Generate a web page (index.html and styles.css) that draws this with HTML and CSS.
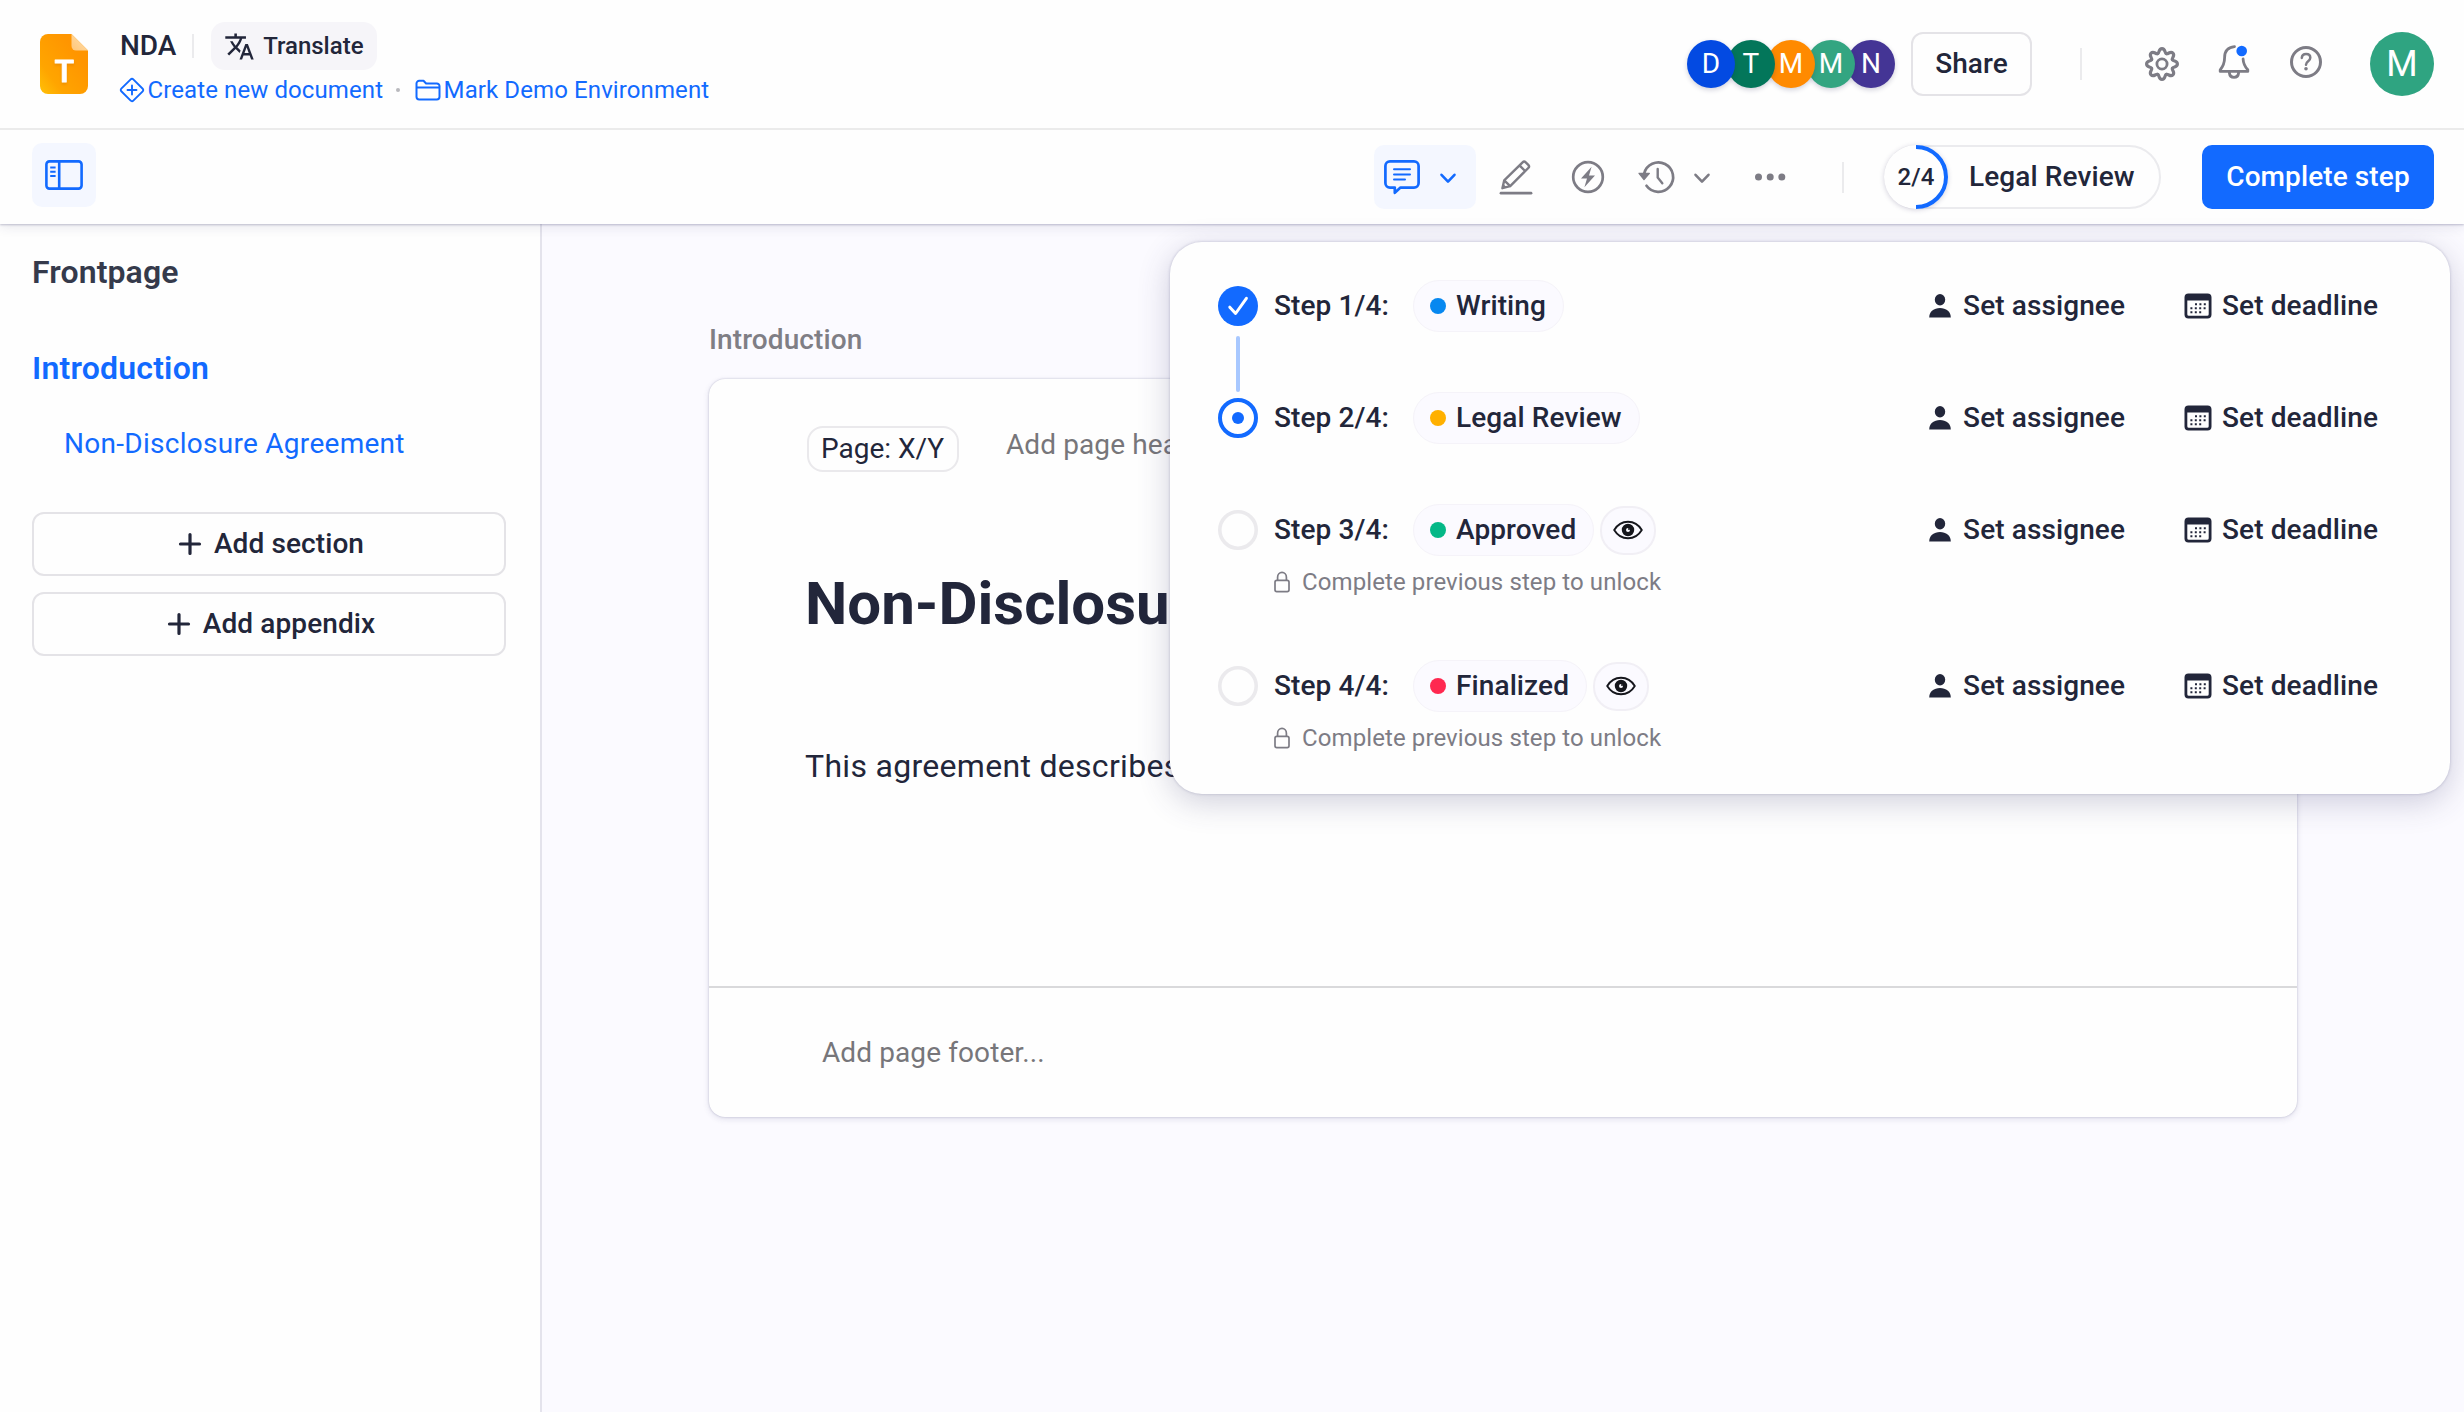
FILE: index.html
```html
<!DOCTYPE html>
<html lang="en">
<head>
<meta charset="utf-8">
<title>NDA</title>
<link rel="stylesheet" href="styles.css">
</head>
<body>
<svg width="0" height="0" class="sprite" aria-hidden="true">
  <defs>
    <path id="cog-tooth" d="M-4.3-10.4C-2.3-11.2-3.6-15.4 0-15.4S2.3-11.2 4.3-10.4"/>
    <symbol id="i-plus" viewBox="0 0 24 24"><path d="M12 2.5v19M2.5 12h19" stroke="currentColor" stroke-width="3.2" stroke-linecap="round"/></symbol>
    <symbol id="i-chevron" viewBox="0 0 20 20"><path d="M3.5 6.8 10 13.6l6.500-6.800" fill="none" stroke="currentColor" stroke-width="2.600" stroke-linecap="round" stroke-linejoin="round"/></symbol>
    <symbol id="i-person" viewBox="0 0 24 26"><ellipse cx="12" cy="6.700" rx="5.200" ry="5.700"/><path d="M1.200 24.600C1.200 18.500 6 15.100 12 15.100s10.800 3.400 10.800 9.500z"/></symbol>
    <symbol id="i-calendar" viewBox="0 0 28 26"><path fill-rule="evenodd" d="M4.500.6h19A4 4 0 0 1 27.500 4.600v17a4 4 0 0 1-4 4h-19a4 4 0 0 1-4-4v-17a4 4 0 0 1 4-4zM3.300 7.600v13.600a1.600 1.600 0 0 0 1.600 1.600h18.200a1.600 1.600 0 0 0 1.600-1.600V7.600z"/><path d="M11 11.200h12M6.400 15.200h17M6.400 19.200h13" stroke="currentColor" stroke-width="2" stroke-dasharray="2 2.400"/></symbol>
    <symbol id="i-eye" viewBox="0 0 30 20"><path d="M1.200 10C4.500 4.500 9.500 1.700 15 1.700S25.500 4.500 28.800 10C25.500 15.500 20.500 18.300 15 18.300S4.500 15.500 1.200 10z" fill="none" stroke="currentColor" stroke-width="1.900" stroke-linejoin="round"/><circle cx="15" cy="10" r="4.100" fill="none" stroke="currentColor" stroke-width="4.200"/><circle cx="16" cy="9" r="1" fill="currentColor"/></symbol>
    <symbol id="i-lock" viewBox="0 0 18 22"><rect x="2" y="9.400" width="14" height="11.200" rx="1.800" fill="none" stroke="currentColor" stroke-width="1.700"/><path d="M4.600 9.400V6.200a4.400 4.800 0 0 1 8.800 0v3.200" fill="none" stroke="currentColor" stroke-width="1.700"/></symbol>
  </defs>
</svg>

<div class="app">
  <header class="topbar">
    <svg class="logo" width="48" height="60" viewBox="0 0 48 60">
      <defs>
        <linearGradient id="logo-fill" x1="0" y1="1" x2=".75" y2=".3"><stop offset="0" stop-color="#ffc107"/><stop offset=".35" stop-color="#ffa500"/><stop offset="1" stop-color="#ff9500"/></linearGradient>
        <linearGradient id="logo-fold" x1="1" y1="0" x2="0" y2="1"><stop offset="0" stop-color="#ffe0b0"/><stop offset="1" stop-color="#ffc678"/></linearGradient>
      </defs>
      <path d="M8 0h23.500L48 16.500V52a8 8 0 0 1-8 8H8a8 8 0 0 1-8-8V8a8 8 0 0 1 8-8z" fill="url(#logo-fill)"/>
      <path d="M31.500 0 48 16.500H36a4.500 4.500 0 0 1-4.500-4.500z" fill="url(#logo-fold)"/>
      <text class="logo-letter" x="24.300" y="47.500" text-anchor="middle">T</text>
    </svg>
    <div class="doc">
      <div class="doc-title">
        <span class="doc-name">NDA</span>
        <i class="rule rule-sm"></i>
        <button class="translate">
          <svg width="31" height="31" viewBox="0 0 24 24" fill="currentColor"><path d="M12.870 15.070l-2.540-2.510.03-.03c1.740-1.940 2.980-4.170 3.710-6.530H17V4h-7V2H8v2H1v1.990h11.170C11.500 7.920 10.440 9.750 9 11.350 8.070 10.320 7.300 9.190 6.690 8h-2c.73 1.630 1.730 3.170 2.980 4.560l-5.090 5.020L4 19l5-5 3.110 3.110.76-2.040zM18.500 10h-2L12 22h2l1.120-3h4.750L21 22h2l-4.500-12zm-2.620 7l1.620-4.330L19.120 17h-3.240z"/></svg>
          <span>Translate</span>
        </button>
      </div>
      <nav class="crumbs">
        <a class="crumb">
          <svg width="26" height="26" viewBox="0 0 26 26" fill="none" stroke="currentColor" stroke-width="1.900" stroke-linejoin="round" stroke-linecap="round"><path d="M11.700 2.300 2.300 11.700a1.800 1.800 0 0 0 0 2.600l9.400 9.400a1.800 1.800 0 0 0 2.600 0l9.400-9.400a1.800 1.800 0 0 0 0-2.600L14.300 2.300a1.800 1.800 0 0 0-2.600 0zM13 8.500v9M8.500 13h9"/></svg>
          <span>Create new document</span>
        </a>
        <i class="crumb-dot"></i>
        <a class="crumb">
          <svg width="26" height="22" viewBox="0 0 26 22" fill="none" stroke="currentColor" stroke-width="2" stroke-linejoin="round"><path d="M1.500 4.500A2.700 2.700 0 0 1 4.200 1.800h4.300l2.600 2.700h10.700a2.700 2.700 0 0 1 2.700 2.700v10.600a2.700 2.700 0 0 1-2.700 2.700H4.200a2.700 2.700 0 0 1-2.700-2.700zM1.500 8.500h23"/></svg>
          <span>Mark Demo Environment</span>
        </a>
      </nav>
    </div>
    <div class="people">
      <span class="face blue">D</span><span class="face teal">T</span><span class="face orange">M</span><span class="face green">M</span><span class="face purple">N</span>
    </div>
    <button class="share">Share</button>
    <i class="rule rule-md"></i>
    <div class="top-icons">
      <svg width="40" height="40" viewBox="-20 -20 40 40" fill="none" stroke="currentColor" stroke-width="3.200" stroke-linecap="round">
        <use href="#cog-tooth"/><use href="#cog-tooth" transform="rotate(45)"/><use href="#cog-tooth" transform="rotate(90)"/><use href="#cog-tooth" transform="rotate(135)"/><use href="#cog-tooth" transform="rotate(180)"/><use href="#cog-tooth" transform="rotate(225)"/><use href="#cog-tooth" transform="rotate(270)"/><use href="#cog-tooth" transform="rotate(315)"/>
        <circle r="5.100" stroke-width="2.800"/>
      </svg>
      <svg width="40" height="40" viewBox="0 0 40 40" fill="none" stroke="currentColor" stroke-width="2.800" stroke-linecap="round" stroke-linejoin="round">
        <path d="M20.500 4.600C13 5.400 10.600 10 10.600 15.500c0 6-1.200 8.500-4.400 12.300v1.600h27.600v-1.600c-3.400-3.600-4.500-6.500-4.700-10.800M15.400 31c.3 2.700 2 4.300 4.600 4.300s4.300-1.600 4.600-4.300"/>
        <circle cx="27.700" cy="9" r="5.300" fill="#126aff" stroke="none"/>
      </svg>
      <svg width="40" height="40" viewBox="0 0 40 40" fill="none" stroke="currentColor" stroke-width="3" stroke-linecap="round">
        <circle cx="20" cy="20" r="14.500"/>
        <path d="M15.800 15.900c.2-2.500 1.900-3.900 4.300-3.900 2.500 0 4.200 1.500 4.200 3.700 0 3.700-4.200 3.400-4.300 7" stroke-width="2.500"/>
        <circle cx="20" cy="26.800" r="1.800" fill="currentColor" stroke="none"/>
      </svg>
    </div>
    <span class="me">M</span>
  </header>

  <div class="toolbar">
    <button class="panel-toggle">
      <svg width="38" height="30" viewBox="0 0 38 30" fill="none" stroke="currentColor" stroke-width="2.600"><rect x="1.400" y="1.400" width="35.200" height="27.200" rx="3"/><path d="M14.200 1.400v27.200"/><path d="M5.200 7.500h5.400M5.200 11.800h5.400M5.200 16.100h5.400" stroke-width="2"/></svg>
    </button>
    <button class="comment">
      <svg width="38" height="36" viewBox="0 0 38 36" fill="none" stroke="currentColor" stroke-width="2.700" stroke-linejoin="round" stroke-linecap="round"><path d="M7 2.400h24a4.600 4.600 0 0 1 4.600 4.600v17a4.600 4.600 0 0 1-4.600 4.600H17.500L11.800 33.800V28.600H7A4.600 4.600 0 0 1 2.400 24V7A4.600 4.600 0 0 1 7 2.400z"/><path d="M11 10.300h16M11 15.400h16M11 20.400h11" stroke-width="2"/></svg>
      <svg width="20" height="20"><use href="#i-chevron"/></svg>
    </button>
    <svg class="tool-pencil" width="36" height="36" viewBox="0 0 36 36" fill="none" stroke="currentColor" stroke-linejoin="round" stroke-linecap="round"><path d="M6.200 21.400 24.600 3.300a2.200 2.200 0 0 1 3.100 0l2.600 2.600a2.200 2.200 0 0 1 0 3.100L12.200 27.200 4.400 29.200zM21.500 6.400l5.600 5.600M6.200 21.400l6 5.800" stroke-width="2.400"/><path d="m4 29.500 1.300-4.600 3.300 3.400z" fill="currentColor" stroke="none"/><path d="M3 34.200h30" stroke-width="2.800"/></svg>
    <svg class="tool-bolt" width="36" height="36" viewBox="0 0 36 36"><circle cx="18" cy="18" r="14.800" fill="none" stroke="currentColor" stroke-width="2.700"/><path d="M21.600 7.800 11 19.600h6L14.400 28.200 25 16.400h-6z" fill="currentColor"/></svg>
    <svg class="tool-history" width="40" height="36" viewBox="0 0 40 36" fill="none" stroke="currentColor" stroke-width="2.700" stroke-linecap="round" stroke-linejoin="round"><path d="M7.100 14.800A14.700 14.700 0 1 1 9.500 26.800"/><path d="M2 14.300h10.400L7 20.700z" fill="currentColor" stroke-width="1.200"/><path d="M20.700 10v8.600l4.600 5.600" stroke-width="2.400"/></svg>
    <svg class="tool-more-history" width="20" height="20"><use href="#i-chevron"/></svg>
    <svg class="tool-dots" width="40" height="36" viewBox="0 0 40 36" fill="currentColor"><circle cx="8.500" cy="18" r="3.500"/><circle cx="20.200" cy="18" r="3.500"/><circle cx="31.800" cy="18" r="3.500"/></svg>
    <i class="rule rule-tool"></i>
    <button class="stage">
      <span class="stage-ring">
        <svg class="ring-arc" width="64" height="64" viewBox="0 0 64 64"><path d="M32 2a30 30 0 0 1 0 60" fill="none" stroke="#126aff" stroke-width="4"/></svg>
        <span>2/4</span>
      </span>
      <span class="stage-name">Legal Review</span>
    </button>
    <button class="complete">Complete step</button>
  </div>

  <div class="body">
    <aside class="sidebar">
      <a class="nav-item">Frontpage</a>
      <a class="nav-item active">Introduction</a>
      <a class="nav-sub">Non-Disclosure Agreement</a>
      <button class="add"><svg width="24" height="24"><use href="#i-plus"/></svg><span>Add section</span></button>
      <button class="add"><svg width="24" height="24"><use href="#i-plus"/></svg><span>Add appendix</span></button>
    </aside>
    <main class="canvas">
      <h2 class="section-label">Introduction</h2>
      <article class="page">
        <div class="page-main">
          <div class="page-head"><span class="page-chip">Page: X/Y</span><span class="page-hint">Add page header...</span></div>
          <h1>Non-Disclosure Agreement</h1>
          <p>This agreement describes</p>
        </div>
        <footer class="page-foot">Add page footer...</footer>
      </article>
    </main>
  </div>

  <section class="steps">
    <div class="step">
      <svg class="mark" width="40" height="40" viewBox="0 0 40 40"><circle cx="20" cy="20" r="20" fill="#126aff"/><path d="m11.800 21.200 5.800 6.300 10.800-15.200" fill="none" stroke="#fff" stroke-width="3" stroke-linecap="round" stroke-linejoin="round"/></svg>
      <span class="step-no">Step 1/4:</span>
      <span class="pill"><i class="dot azure"></i>Writing</span>
      <span class="set-who"><svg width="24" height="26" fill="currentColor"><use href="#i-person"/></svg>Set assignee</span>
      <span class="set-when"><svg width="28" height="26" fill="currentColor"><use href="#i-calendar"/></svg>Set deadline</span>
    </div>
    <div class="link"></div>
    <div class="step">
      <svg class="mark" width="40" height="40" viewBox="0 0 40 40"><circle cx="20" cy="20" r="18" fill="#fff" stroke="#126aff" stroke-width="4"/><circle cx="20" cy="20" r="6" fill="#126aff"/></svg>
      <span class="step-no">Step 2/4:</span>
      <span class="pill"><i class="dot amber"></i>Legal Review</span>
      <span class="set-who"><svg width="24" height="26" fill="currentColor"><use href="#i-person"/></svg>Set assignee</span>
      <span class="set-when"><svg width="28" height="26" fill="currentColor"><use href="#i-calendar"/></svg>Set deadline</span>
    </div>
    <div class="link off"></div>
    <div class="step">
      <svg class="mark" width="40" height="40" viewBox="0 0 40 40"><circle cx="20" cy="20" r="18.200" fill="none" stroke="#ebeaed" stroke-width="3.600"/></svg>
      <span class="step-no">Step 3/4:</span>
      <span class="pill"><i class="dot jade"></i>Approved</span>
      <span class="eye"><svg width="30" height="20"><use href="#i-eye"/></svg></span>
      <span class="set-who"><svg width="24" height="26" fill="currentColor"><use href="#i-person"/></svg>Set assignee</span>
      <span class="set-when"><svg width="28" height="26" fill="currentColor"><use href="#i-calendar"/></svg>Set deadline</span>
    </div>
    <div class="locked"><svg width="18" height="22"><use href="#i-lock"/></svg>Complete previous step to unlock</div>
    <div class="step last">
      <svg class="mark" width="40" height="40" viewBox="0 0 40 40"><circle cx="20" cy="20" r="18.200" fill="none" stroke="#ebeaed" stroke-width="3.600"/></svg>
      <span class="step-no">Step 4/4:</span>
      <span class="pill"><i class="dot red"></i>Finalized</span>
      <span class="eye"><svg width="30" height="20"><use href="#i-eye"/></svg></span>
      <span class="set-who"><svg width="24" height="26" fill="currentColor"><use href="#i-person"/></svg>Set assignee</span>
      <span class="set-when"><svg width="28" height="26" fill="currentColor"><use href="#i-calendar"/></svg>Set deadline</span>
    </div>
    <div class="locked"><svg width="18" height="22"><use href="#i-lock"/></svg>Complete previous step to unlock</div>
  </section>
</div>
</body>
</html>
```
FILE: styles.css
```css
:root {
  --ink: #22263a;
  --grey: #7d7c85;
  --blue: #126aff;
  --line: #e4e3e7;
}

* { box-sizing: border-box; }

body {
  margin: 0;
  font-family: Roboto, sans-serif;
  font-size: 28px;
  line-height: 32px;
  letter-spacing: .1px;
  color: var(--ink);
  background: #fefefe;
}

button {
  margin: 0;
  padding: 0;
  border: 0;
  background: none;
  font: inherit;
  font-weight: 500;
  letter-spacing: inherit;
  color: inherit;
  display: flex;
  align-items: center;
}

svg { display: block; flex: none; }
.sprite { position: absolute; }

.app {
  position: relative;
  width: 2464px;
  height: 1412px;
  overflow: hidden;
  display: flex;
  flex-direction: column;
}

.rule { display: block; width: 2px; background: #ebebed; }
.rule-sm { height: 24px; margin: 0 17px 0 16px; }
.rule-md { height: 32px; margin: 0 60px 0 48px; }
.rule-tool { height: 31px; margin: 0 40px 0 52px; }

/* Top bar */
.topbar {
  height: 130px;
  flex: none;
  padding: 0 30px 0 40px;
  border-bottom: 2px solid #ebebeb;
  display: flex;
  align-items: center;
}
.logo-letter {
  font: 500 32px Roboto, sans-serif;
  fill: #fff;
  stroke: #fff;
  stroke-width: 1;
  stroke-linejoin: round;
  filter: drop-shadow(0 2px 1px rgba(190, 100, 0, .25));
}
.doc { margin-left: 31px; margin-right: auto; height: 84px; }
.doc-title { display: flex; align-items: center; height: 48px; padding-left: 1px; font-weight: 500; }
.doc-name { letter-spacing: -.1px; }
.translate {
  height: 48px;
  padding: 0 13px;
  gap: 8px;
  border-radius: 14px;
  background: #f6f5f9;
  font-size: 24px;
  letter-spacing: 0;
}
.crumbs {
  display: flex;
  align-items: center;
  height: 28px;
  margin-top: 6px;
  color: var(--blue);
  font-size: 24px;
}
.crumb { display: flex; align-items: center; gap: 2.5px; }
.crumb-dot { width: 4px; height: 4px; border-radius: 50%; background: #b9b9bd; margin: 0 15px 0 13px; }

.people { display: flex; }
.face {
  width: 48px;
  height: 48px;
  margin-left: -8px;
  border-radius: 50%;
  color: #fff;
  display: flex;
  align-items: center;
  justify-content: center;
  position: relative;
  box-shadow: 0 2px 5px rgba(30, 30, 80, .2);
}
.blue { background: #034ae2; z-index: 5; }
.teal { background: #03765a; z-index: 4; }
.orange { background: #ff8a00; z-index: 3; }
.green { background: #33a581; z-index: 2; }
.purple { background: #443595; z-index: 1; }
.share {
  width: 121px;
  height: 64px;
  margin-left: 16px;
  justify-content: center;
  border: 2px solid var(--line);
  border-radius: 12px;
}
.top-icons { display: flex; gap: 32px; color: var(--grey); margin-right: 44px; }
.top-icons svg:nth-child(n+2) { margin-top: -2px; }
.me {
  width: 64px;
  height: 64px;
  border-radius: 50%;
  background: #2fa481;
  color: #fff;
  font-size: 36px;
  display: flex;
  align-items: center;
  justify-content: center;
}

/* Toolbar */
.toolbar {
  height: 94px;
  flex: none;
  padding: 0 30px 0 32px;
  display: flex;
  align-items: center;
  background: #fefefe;
  color: var(--grey);
  position: relative;
  z-index: 2;
  box-shadow: 0 1px 2px rgba(40, 40, 90, .25), 0 2px 12px rgba(40, 40, 90, .12);
  clip-path: inset(0 0 -20px 0);
}
.panel-toggle {
  width: 64px;
  height: 64px;
  margin-top: -4px;
  margin-right: auto;
  justify-content: center;
  border-radius: 10px;
  background: #f4f7ff;
  color: var(--blue);
}
.comment {
  width: 102px;
  height: 64px;
  padding-left: 9px;
  gap: 17px;
  border-radius: 10px;
  background: #f4f7ff;
  color: var(--blue);
}
.comment svg:last-child { margin-top: 1px; }
.tool-pencil { margin-left: 22px; }
.tool-bolt { margin-left: 36px; }
.tool-history { margin-left: 31px; }
.tool-more-history { margin: 1px 0 0 15px; }
.tool-dots { margin-left: 38px; }
.stage {
  width: 277px;
  height: 64px;
  border: 2px solid #ebebee;
  border-radius: 32px;
  color: var(--ink);
}
.stage-ring {
  position: relative;
  width: 64px;
  height: 64px;
  margin-left: -2px;
  border-radius: 50%;
  display: flex;
  align-items: center;
  justify-content: center;
  font-size: 24px;
  background: #fefefe;
  box-shadow: 0 1px 5px rgba(60, 50, 100, .22);
}
.ring-arc { position: absolute; inset: 0; }
.stage-name { margin-left: 21px; }
.complete {
  width: 232px;
  height: 64px;
  margin-left: 41px;
  justify-content: center;
  border-radius: 10px;
  background: var(--blue);
  color: #fff;
}

/* Body */
.body { flex: 1; display: flex; }
.sidebar {
  width: 542px;
  padding: 32px 34px 0 32px;
  border-right: 2px solid #e4e3ec;
}
.nav-item {
  display: block;
  height: 32px;
  margin-bottom: 64px;
  font-size: 32px;
  font-weight: 600;
  color: #353a4b;
}
.nav-item.active { color: var(--blue); margin-bottom: 44px; letter-spacing: .2px; }
.nav-sub { display: block; margin: 0 0 52px 32px; color: var(--blue); letter-spacing: .28px; }
.add {
  width: 474px;
  height: 64px;
  margin-bottom: 16px;
  padding-left: 4px;
  justify-content: center;
  gap: 12px;
  border: 2px solid var(--line);
  border-radius: 12px;
}

.canvas { flex: 1; padding: 100px 166px 0 167px; background: #fbfaff; }
.section-label { margin: 0 0 23px; font-size: 28px; font-weight: 500; color: #7f7e85; }
.page {
  width: 1588px;
  height: 738px;
  border-radius: 16px;
  background: #fefefe;
  box-shadow: 0 0 2px rgba(60, 60, 110, .3), 0 2px 6px rgba(60, 60, 110, .14);
  display: flex;
  flex-direction: column;
}
.page-main { flex: 1; padding: 47px 96px 0 98px; border-bottom: 2px solid #d9d9db; }
.page-head { display: flex; }
.page-chip {
  width: 152px;
  height: 46px;
  padding-right: 1px;
  border: 2px solid #eae9ec;
  border-radius: 16px;
  line-height: 42px;
  text-align: center;
  letter-spacing: 0;
}
.page-hint { margin: 3px 0 0 47px; color: #77767a; }
h1 { margin: 96px 0 0 -2px; font-size: 60px; line-height: 72px; font-weight: 700; letter-spacing: 0; }
p { margin: 106px 0 0 -2px; font-size: 32px; line-height: 40px; letter-spacing: .3px; }
.page-foot { height: 129px; padding: 49px 0 0 113px; color: #77767a; }

/* Workflow popover */
.steps {
  position: absolute;
  left: 1170px;
  top: 242px;
  width: 1280px;
  height: 552px;
  padding: 38px 72px 0 48px;
  border-radius: 32px;
  background: #fefefe;
  z-index: 3;
  box-shadow: 0 0 3px rgba(60, 60, 110, .28), 0 8px 32px rgba(60, 60, 110, .24);
}
.step { display: flex; align-items: center; height: 52px; font-weight: 500; }
.step.last { margin-top: 64px; }
.step-no { width: 139px; margin-left: 16px; }
.pill {
  height: 52px;
  padding: 0 17px 0 16px;
  gap: 10px;
  display: flex;
  align-items: center;
  border: 1px solid #f5f3f9;
  border-radius: 26px;
  background: #fbfaff;
}
.dot { width: 16px; height: 16px; border-radius: 50%; }
.azure { background: #0788f0; }
.amber { background: #ffb000; }
.jade { background: #04b887; }
.red { background: #ff2850; }
.eye {
  width: 56px;
  height: 49px;
  margin-left: 6px;
  display: flex;
  align-items: center;
  justify-content: center;
  border: 2px solid #f1eff5;
  border-radius: 24px;
  background: #fbfaff;
  color: #15161c;
}
.set-who, .set-when { display: flex; align-items: center; }
.set-who { margin-left: auto; gap: 11px; }
.set-when { margin-left: 59px; gap: 10px; }
.link { width: 4px; height: 56px; margin: 4px 0 0 18px; border-radius: 2px; background: #a8c8ff; }
.link.off { background: none; height: 60px; margin-top: 0; }
.locked {
  display: flex;
  align-items: center;
  height: 28px;
  margin: 12px 0 0 55px;
  gap: 11px;
  font-size: 24px;
  color: var(--grey);
}
```
